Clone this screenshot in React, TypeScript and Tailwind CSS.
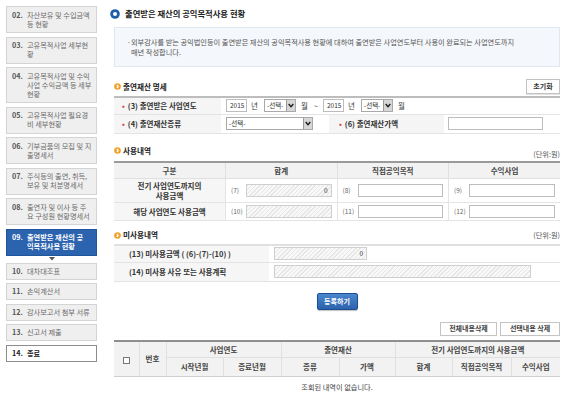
import React from 'react';

type NavItem = { no: string; lines: string[]; state?: 'active' | 'current' };

const navItems: NavItem[] = [
  { no: '02.', lines: ['자산보유 및 수입금액', '등 현황'] },
  { no: '03.', lines: ['고유목적사업 세부현', '황'] },
  { no: '04.', lines: ['고유목적사업 및 수익', '사업 수익금액 등 세부', '현황'] },
  { no: '05.', lines: ['고유목적사업 필요경', '비 세부현황'] },
  { no: '06.', lines: ['기부금품의 모집 및 지', '출명세서'] },
  { no: '07.', lines: ['주식등의 출연, 취득,', '보유 및 처분명세서'] },
  { no: '08.', lines: ['출연자 및 이사 등 주', '요 구성원 현황명세서'] },
  { no: '09.', lines: ['출연받은 재산의 공', '익목적사용 현황'], state: 'active' },
  { no: '10.', lines: ['대차대조표'] },
  { no: '11.', lines: ['손익계산서'] },
  { no: '12.', lines: ['감사보고서 첨부 서류'] },
  { no: '13.', lines: ['신고서 제출'] },
  { no: '14.', lines: ['종료'], state: 'current' },
];

const Chevron = () => (
  <svg width="6" height="5" viewBox="0 0 6 5">
    <path d="M0.7 1 L3 3.6 L5.3 1" fill="none" stroke="#1a1a1a" strokeWidth="1.4" />
  </svg>
);

const OrangeDot = () => (
  <svg width="7" height="7" viewBox="0 0 7 7" className="shrink-0">
    <circle cx="3.5" cy="3.5" r="3.3" fill="#f0a12c" />
    <path d="M2.8 2 L4.3 3.5 L2.8 5" fill="none" stroke="#fff" strokeWidth="1.1" />
  </svg>
);

const BlueDot = () => (
  <svg width="10" height="10" viewBox="0 0 10 10" className="shrink-0">
    <circle cx="5" cy="5" r="4.8" fill="#1f5ea9" />
    <circle cx="5" cy="5" r="2" fill="#fff" />
  </svg>
);

const Select: React.FC<{ className: string }> = ({ className }) => (
  <div className={`flex h-[13px] items-stretch border border-[#a9a9a9] bg-white ${className}`}>
    <span className="flex-1 pl-[2px] text-[6.5px] leading-[11px] text-[#333]">-선택-</span>
    <span className="flex w-[9px] items-center justify-center border-l border-[#9a9a9a] bg-[#d6d6d6]">
      <Chevron />
    </span>
  </div>
);

const Hatched: React.FC<{ className: string; value?: string }> = ({ className, value }) => (
  <div
    className={`h-[13px] border border-[#cfcfcf] bg-[image:repeating-linear-gradient(135deg,#e6e6e6_0px,#e6e6e6_1px,#f8f8f8_1px,#f8f8f8_3px)] pr-[3px] text-right text-[6.5px] leading-[11px] text-[#333] ${className}`}
  >
    {value}
  </div>
);

const Box: React.FC<{ className: string; value?: string }> = ({ className, value }) => (
  <div className={`h-[13px] border border-[#bdbdbd] bg-white pl-[3px] text-[6.5px] leading-[11px] text-[#333] ${className}`}>
    {value}
  </div>
);

const SectionTitle: React.FC<{ children: React.ReactNode }> = ({ children }) => (
  <div className="flex items-center gap-[2px] text-[7.6px] font-bold leading-[10px] text-[#222]">
    <OrangeDot />
    {children}
  </div>
);

const Req = () => <span className="mr-[3px] text-[#d93a3a]">•</span>;

const Sidebar = () => (
  <div className="ml-[6px] flex w-[91px] shrink-0 flex-col gap-[3.5px] pt-[6px]">
    {navItems.map(item => (
      <React.Fragment key={item.no}>
        <div
          className={`flex border px-[5px] leading-[9px] text-[7.2px] ${
            item.lines.length > 1 ? 'py-[3.5px]' : 'py-[3px]'
          } ${
            item.state === 'active'
              ? 'border-[#1f569c] bg-[#2b63ae] font-bold text-white'
              : item.state === 'current'
              ? 'border-[#8c8c8c] bg-white font-bold text-[#222]'
              : 'border-[#d4d4d4] bg-[#efefef] text-[#6a6a6a]'
          }`}
        >
          <span className={`w-[15px] shrink-0 font-bold ${item.state ? '' : 'text-[#555]'}`}>{item.no}</span>
          <div className="whitespace-nowrap">
            {item.lines.map(l => (
              <div key={l}>{l}</div>
            ))}
          </div>
        </div>
        {item.state === 'active' && (
          <div className="-my-[2px] flex h-[4px] justify-center">
            <svg width="6" height="4" viewBox="0 0 6 4">
              <path d="M0 0 H6 L3 3.5 Z" fill="#555" />
            </svg>
          </div>
        )}
      </React.Fragment>
    ))}
  </div>
);

const th = 'border-r border-b border-[#e0e0e0] bg-[#f2f2f2] text-center font-bold text-[#444] last:border-r-0';

const App: React.FC = () => {
  return (
    <div className="flex h-[400px] w-[567px] overflow-hidden bg-white font-['Noto_Sans_CJK_KR','Noto_Sans',sans-serif] text-[7.5px] text-[#444]">
      <Sidebar />

      <div className="flex-1 pl-[13px] pr-[7px] pt-[8px]">
        <div className="flex h-[11px] items-center gap-[5px] text-[8.3px] font-bold text-[#222]">
          <BlueDot />
          출연받은 재산의 공익목적사용 현황
        </div>

        <div className="ml-[4px]">
          <div className="mt-[8px] flex h-[40px] border border-[#e1e7ef] bg-[#f4f7fb] pl-[12px] pt-[9px] text-[7.2px] leading-[10px] text-[#555]">
            <span className="w-[4px] shrink-0">·</span>
            <div className="whitespace-nowrap">
              <div>외부감사를 받는 공익법인등이 출연받은 재산의 공익목적사용 현황에 대하여 출연받은 사업연도부터 사용이 완료되는 사업연도까지</div>
              <div>매년 작성합니다.</div>
            </div>
          </div>

          <div className="mt-[12px] flex h-[15px] items-center justify-between">
            <SectionTitle>출연재산 명세</SectionTitle>
            <button className="h-[15px] w-[34px] border border-[#c2c2c2] bg-white text-[7px] font-bold text-[#333] shadow-[0_1px_0_#e2e2e2]">
              초기화
            </button>
          </div>

          <table className="mt-[2px] w-full border-collapse border-t-2 border-[#bdbdbd]">
            <colgroup>
              <col className="w-[107px]" />
              <col className="w-[108px]" />
              <col className="w-[115px]" />
              <col />
            </colgroup>
            <tbody>
              <tr className="h-[17px] border-b border-[#e4e4e4]">
                <td className="bg-[#f5f5f5] pl-[8px] font-bold text-[#333]">
                  <Req />
                  (3) 출연받은 사업연도
                </td>
                <td colSpan={3} className="pl-[5px]">
                  <div className="flex items-center">
                    <Box className="w-[21px]" value="2015" />
                    <span className="ml-[4px]">년</span>
                    <Select className="ml-[6px] w-[32px]" />
                    <span className="ml-[5px]">월</span>
                    <span className="ml-[6px]">~</span>
                    <Box className="ml-[5px] w-[21px]" value="2015" />
                    <span className="ml-[4px]">년</span>
                    <Select className="ml-[6px] w-[32px]" />
                    <span className="ml-[5px]">월</span>
                  </div>
                </td>
              </tr>
              <tr className="h-[19px] border-b border-[#e4e4e4]">
                <td className="bg-[#f5f5f5] pl-[8px] font-bold text-[#333]">
                  <Req />
                  (4) 출연재산종류
                </td>
                <td className="pl-[5px]">
                  <Select className="w-[87px]" />
                </td>
                <td className="bg-[#f5f5f5] pl-[10px] font-bold text-[#333]">
                  <Req />
                  (6) 출연재산가액
                </td>
                <td className="pl-[4px]">
                  <Box className="w-[95px]" />
                </td>
              </tr>
            </tbody>
          </table>

          <div className="mt-[9px] flex justify-between">
            <SectionTitle>사용내역</SectionTitle>
            <span className="mt-[6px] text-[7.2px] leading-[10px] text-[#555]">(단위:원)</span>
          </div>

          <table className="mt-[2px] w-full table-fixed border-collapse border-t-2 border-[#9a9a9a]">
            <thead>
              <tr className="h-[17px]">
                <th className={th}>구분</th>
                <th className={th}>합계</th>
                <th className={th}>직접공익목적</th>
                <th className={th}>수익사업</th>
              </tr>
            </thead>
            <tbody>
              <tr className="h-[24px] border-b border-[#e4e4e4]">
                <td className="border-r border-[#e4e4e4] bg-[#f6f6f6] py-[1px] text-center font-bold leading-[10px] text-[#333]">
                  전기 사업연도까지의
                  <br />
                  사용금액
                </td>
                <td className="border-r border-[#e4e4e4] px-[5px]">
                  <div className="flex items-center gap-[4px]">
                    <span className="w-[11px] text-[6.5px] text-[#666]">(7)</span>
                    <Hatched className="flex-1" value="0" />
                  </div>
                </td>
                <td className="border-r border-[#e4e4e4] px-[5px]">
                  <div className="flex items-center gap-[4px]">
                    <span className="w-[11px] text-[6.5px] text-[#666]">(8)</span>
                    <Box className="flex-1" />
                  </div>
                </td>
                <td className="px-[5px]">
                  <div className="flex items-center gap-[4px]">
                    <span className="w-[11px] text-[6.5px] text-[#666]">(9)</span>
                    <Box className="flex-1" />
                  </div>
                </td>
              </tr>
              <tr className="h-[18px] border-b border-[#e4e4e4]">
                <td className="border-r border-[#e4e4e4] bg-[#f6f6f6] text-center font-bold text-[#333]">
                  해당 사업연도 사용금액
                </td>
                <td className="border-r border-[#e4e4e4] px-[5px]">
                  <div className="flex items-center gap-[4px]">
                    <span className="w-[11px] text-[6.5px] text-[#666]">(10)</span>
                    <Hatched className="flex-1" />
                  </div>
                </td>
                <td className="border-r border-[#e4e4e4] px-[5px]">
                  <div className="flex items-center gap-[4px]">
                    <span className="w-[11px] text-[6.5px] text-[#666]">(11)</span>
                    <Box className="flex-1" />
                  </div>
                </td>
                <td className="px-[5px]">
                  <div className="flex items-center gap-[4px]">
                    <span className="w-[11px] text-[6.5px] text-[#666]">(12)</span>
                    <Box className="flex-1" />
                  </div>
                </td>
              </tr>
            </tbody>
          </table>

          <div className="mt-[9px] flex items-center justify-between">
            <SectionTitle>미사용내역</SectionTitle>
            <span className="text-[7.2px] leading-[10px] text-[#555]">(단위:원)</span>
          </div>

          <table className="mt-[4px] w-full border-collapse border-t-2 border-[#e0e0e0]">
            <colgroup>
              <col className="w-[155px]" />
              <col />
            </colgroup>
            <tbody>
              <tr className="h-[17px] border-b border-[#e4e4e4]">
                <td className="bg-[#f6f6f6] pl-[15px] font-bold text-[#333]">(13) 미사용금액 ( (6)-(7)-(10) )</td>
                <td className="pl-[5px]">
                  <Hatched className="w-[93px]" value="0" />
                </td>
              </tr>
              <tr className="h-[19px] border-b border-[#e4e4e4]">
                <td className="bg-[#f6f6f6] pl-[15px] font-bold text-[#333]">(14) 미사용 사유 또는 사용계획</td>
                <td className="pl-[5px]">
                  <Hatched className="w-[257px]" />
                </td>
              </tr>
            </tbody>
          </table>

          <div className="mt-[11px] flex justify-center">
            <button className="h-[17px] w-[41px] rounded-[2px] border border-[#1d4f8f] bg-gradient-to-b from-[#4a87cf] to-[#2b62ad] text-[7px] font-bold text-white shadow-[0_1px_1px_rgba(0,0,0,0.25)]">
              등록하기
            </button>
          </div>

          <div className="mt-[12px] flex justify-end gap-[3px]">
            <button className="h-[14px] w-[57px] border border-[#c4c4c4] bg-white text-[7px] font-bold text-[#444]">
              전체내용삭제
            </button>
            <button className="h-[14px] w-[60px] border border-[#c4c4c4] bg-white text-[7px] font-bold text-[#444]">
              선택내용 삭제
            </button>
          </div>

          <table className="mt-[4px] w-full border-collapse border-t-2 border-[#8f8f8f]">
            <colgroup>
              <col className="w-[25px]" />
              <col className="w-[27px]" />
              <col className="w-[57px]" />
              <col className="w-[58px]" />
              <col className="w-[58px]" />
              <col className="w-[56px]" />
              <col className="w-[57px]" />
              <col className="w-[59px]" />
              <col />
            </colgroup>
            <thead>
              <tr className="h-[17px]">
                <th rowSpan={2} className={`${th} border-b-[#cfcfcf]`}>
                  <span className="inline-block h-[7px] w-[7px] border border-[#777] bg-white align-middle" />
                </th>
                <th rowSpan={2} className={`${th} border-b-[#cfcfcf]`}>번호</th>
                <th colSpan={2} className={th}>사업연도</th>
                <th colSpan={2} className={th}>출연재산</th>
                <th colSpan={3} className={th}>전기 사업연도까지의 사용금액</th>
              </tr>
              <tr className="h-[19px]">
                {['시작년월', '종료년월', '종류', '가액', '합계', '직접공익목적', '수익사업'].map(h => (
                  <th key={h} className={`${th} border-b-[#cfcfcf] font-bold`}>
                    {h}
                  </th>
                ))}
              </tr>
            </thead>
            <tbody>
              <tr className="h-[22px]">
                <td colSpan={9} className="text-center text-[7.2px] text-[#444]">
                  조회된 내역이 없습니다.
                </td>
              </tr>
            </tbody>
          </table>
        </div>
      </div>
    </div>
  );
};

export default App;
